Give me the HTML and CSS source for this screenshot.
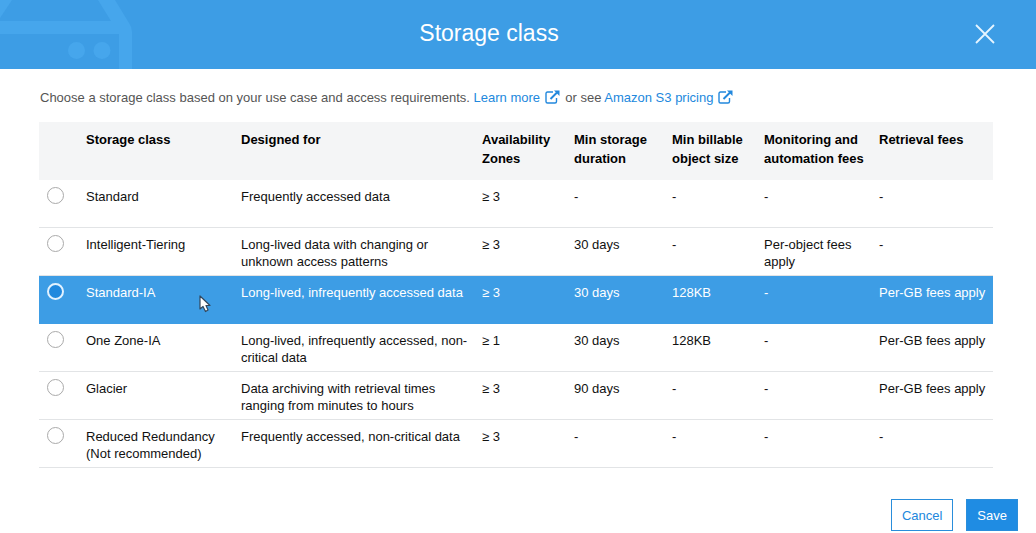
FILE: index.html
```html
<!DOCTYPE html>
<html lang="en">
<head>
<meta charset="utf-8">
<meta name="viewport" content="width=device-width, initial-scale=1">
<title>Storage class</title>
<link rel="stylesheet" href="styles.css">
</head>
<body>
<svg class="symbols" aria-hidden="true">
  <symbol id="external" viewBox="0 0 15 14">
    <path d="M8 2H2.500Q1 2 1 3.500V11.500Q1 13 2.500 13H10Q11.500 13 11.500 11.500V8" fill="none" stroke="currentColor" stroke-width="1.400"/>
    <path d="M5.500 9L12 2.500" fill="none" stroke="currentColor" stroke-width="2"/>
    <path d="M9 0.500H14.500V6Z" fill="currentColor"/>
  </symbol>
</svg>
<form class="dialog" role="dialog" aria-labelledby="dialog-title">
  <header class="dialog-header">
    <svg class="header-art" viewBox="0 0 140 69" aria-hidden="true">
      <g fill="#46a6ec">
        <path d="M0 0H12L0 18Z"/>
        <path d="M98 0H115L129 23Q132 27 132 32V69H119V34H0V21H111Z"/>
        <circle cx="76.500" cy="50.500" r="8.500"/>
        <circle cx="102" cy="50.500" r="8.500"/>
      </g>
    </svg>
    <h1 class="dialog-title" id="dialog-title">Storage class</h1>
    <button class="close" type="button" aria-label="Close">
      <svg viewBox="0 0 20 20" aria-hidden="true"><path d="M1 1L19 19M19 1L1 19" fill="none" stroke="currentColor" stroke-width="1.800"/></svg>
    </button>
  </header>
  <div class="dialog-body">
    <p class="intro">Choose a storage class based on your use case and access requirements. <a href="#">Learn more <svg class="external"><use href="#external"/></svg></a> or see <a href="#">Amazon S3 pricing <svg class="external"><use href="#external"/></svg></a></p>
    <table class="classes">
      <colgroup>
        <col class="col-radio"><col class="col-name"><col class="col-use"><col class="col-zones"><col class="col-duration"><col class="col-size"><col class="col-fees"><col>
      </colgroup>
      <thead>
        <tr><td></td><th scope="col">Storage class</th><th scope="col">Designed for</th><th scope="col">Availability Zones</th><th scope="col">Min storage duration</th><th scope="col">Min billable object size</th><th scope="col">Monitoring and automation fees</th><th scope="col">Retrieval fees</th></tr>
      </thead>
      <tbody>
        <tr><td class="pick"><input type="radio" name="class" id="c1"></td><td><label for="c1">Standard</label></td><td>Frequently accessed data</td><td>≥ 3</td><td>-</td><td>-</td><td>-</td><td>-</td></tr>
        <tr><td class="pick"><input type="radio" name="class" id="c2"></td><td><label for="c2">Intelligent-Tiering</label></td><td>Long-lived data with changing or unknown access patterns</td><td>≥ 3</td><td>30 days</td><td>-</td><td>Per-object fees apply</td><td>-</td></tr>
        <tr class="selected"><td class="pick"><input type="radio" name="class" id="c3" checked></td><td><label for="c3">Standard-IA</label><svg class="cursor" viewBox="0 0 12 18" aria-hidden="true"><path d="M1 1V14L4 11.500L6.500 16.500L9 15L7 10.500H11Z" fill="#fff" stroke="#33475c" stroke-width="1.200" stroke-linejoin="round"/></svg></td><td>Long-lived, infrequently accessed data</td><td>≥ 3</td><td>30 days</td><td>128KB</td><td>-</td><td>Per-GB fees apply</td></tr>
        <tr><td class="pick"><input type="radio" name="class" id="c4"></td><td><label for="c4">One Zone-IA</label></td><td>Long-lived, infrequently accessed, non-critical data</td><td>≥ 1</td><td>30 days</td><td>128KB</td><td>-</td><td>Per-GB fees apply</td></tr>
        <tr><td class="pick"><input type="radio" name="class" id="c5"></td><td><label for="c5">Glacier</label></td><td>Data archiving with retrieval times ranging from minutes to hours</td><td>≥ 3</td><td>90 days</td><td>-</td><td>-</td><td>Per-GB fees apply</td></tr>
        <tr><td class="pick"><input type="radio" name="class" id="c6"></td><td><label for="c6">Reduced Redundancy (Not recommended)</label></td><td>Frequently accessed, non-critical data</td><td>≥ 3</td><td>-</td><td>-</td><td>-</td><td>-</td></tr>
      </tbody>
    </table>
  </div>
  <footer class="dialog-footer">
    <button class="button" type="button">Cancel</button>
    <button class="button primary" type="submit">Save</button>
  </footer>
</form>
</body>
</html>
```

FILE: styles.css
```css
* { box-sizing: border-box; }

body {
  margin: 0;
  background: #fff;
  color: #111;
  font: 13px/17px "Liberation Sans", Arial, sans-serif;
}

.symbols { position: absolute; width: 0; height: 0; }

.dialog-header {
  display: grid;
  grid-template-columns: 1fr auto 1fr;
  align-items: center;
  background: #3d9de5;
  color: #fff;
}

.header-art { display: block; width: 140px; height: 69px; }

.dialog-title {
  margin: 0;
  padding: 0 58px 4px 0;
  font-size: 23px;
  line-height: 26px;
  font-weight: 400;
}

.close {
  justify-self: end;
  margin-right: 41px;
  padding: 0 0 2px;
  border: 0;
  background: none;
  color: #e6f5ff;
  cursor: pointer;
}

.close svg { display: block; width: 20px; height: 20px; }

.dialog-body { padding: 20px 43px 0 39px; }

.intro { margin: 0 0 16px; padding-left: 1px; color: #555; }
.intro a { color: #2288dd; text-decoration: none; }

.external { width: 15px; height: 14px; margin: 0 2px 0 1px; vertical-align: -2px; }

.classes {
  width: 100%;
  table-layout: fixed;
  border-collapse: separate;
  border-spacing: 0;
}

.col-radio { width: 47px; }
.col-name { width: 155px; }
.col-use { width: 241px; }
.col-zones { width: 92px; }
.col-duration { width: 98px; }
.col-size { width: 92px; }
.col-fees { width: 115px; }

.classes th,
.classes td {
  padding: 0;
  text-align: left;
  vertical-align: top;
}

.classes thead th,
.classes thead td {
  height: 58px;
  padding-top: 8px;
  background: #f4f5f6;
  color: #000;
  line-height: 19px;
}

.classes tbody td {
  position: relative;
  height: 48px;
  padding: 8px 4px 4px 0;
  border-bottom: 1px solid #e2e4e6;
}

.classes tbody .pick { padding: 7px 0 0 8px; }

.classes tbody .selected td {
  background: #3d9de5;
  border-color: #3d9de5;
  color: #fff;
}

.classes input {
  appearance: none;
  display: block;
  width: 17px;
  height: 17px;
  margin: 0;
  border: 1px solid #aaa;
  border-radius: 50%;
  background: #fff;
}

.classes input:checked { border: 2px solid #e2f2ff; background: #1f88de; }

.cursor {
  position: absolute;
  left: 113px;
  top: 19px;
  width: 12px;
  height: 18px;
}

.dialog-footer {
  display: flex;
  justify-content: flex-end;
  gap: 13px;
  padding: 31px 18px 2px;
}

.button {
  height: 32px;
  padding: 0 10px;
  border: 1px solid #2a8edb;
  background: #fff;
  color: #2288dd;
  font: inherit;
  cursor: pointer;
}

.primary { background: #1f8ce3; color: #fff; }
```
